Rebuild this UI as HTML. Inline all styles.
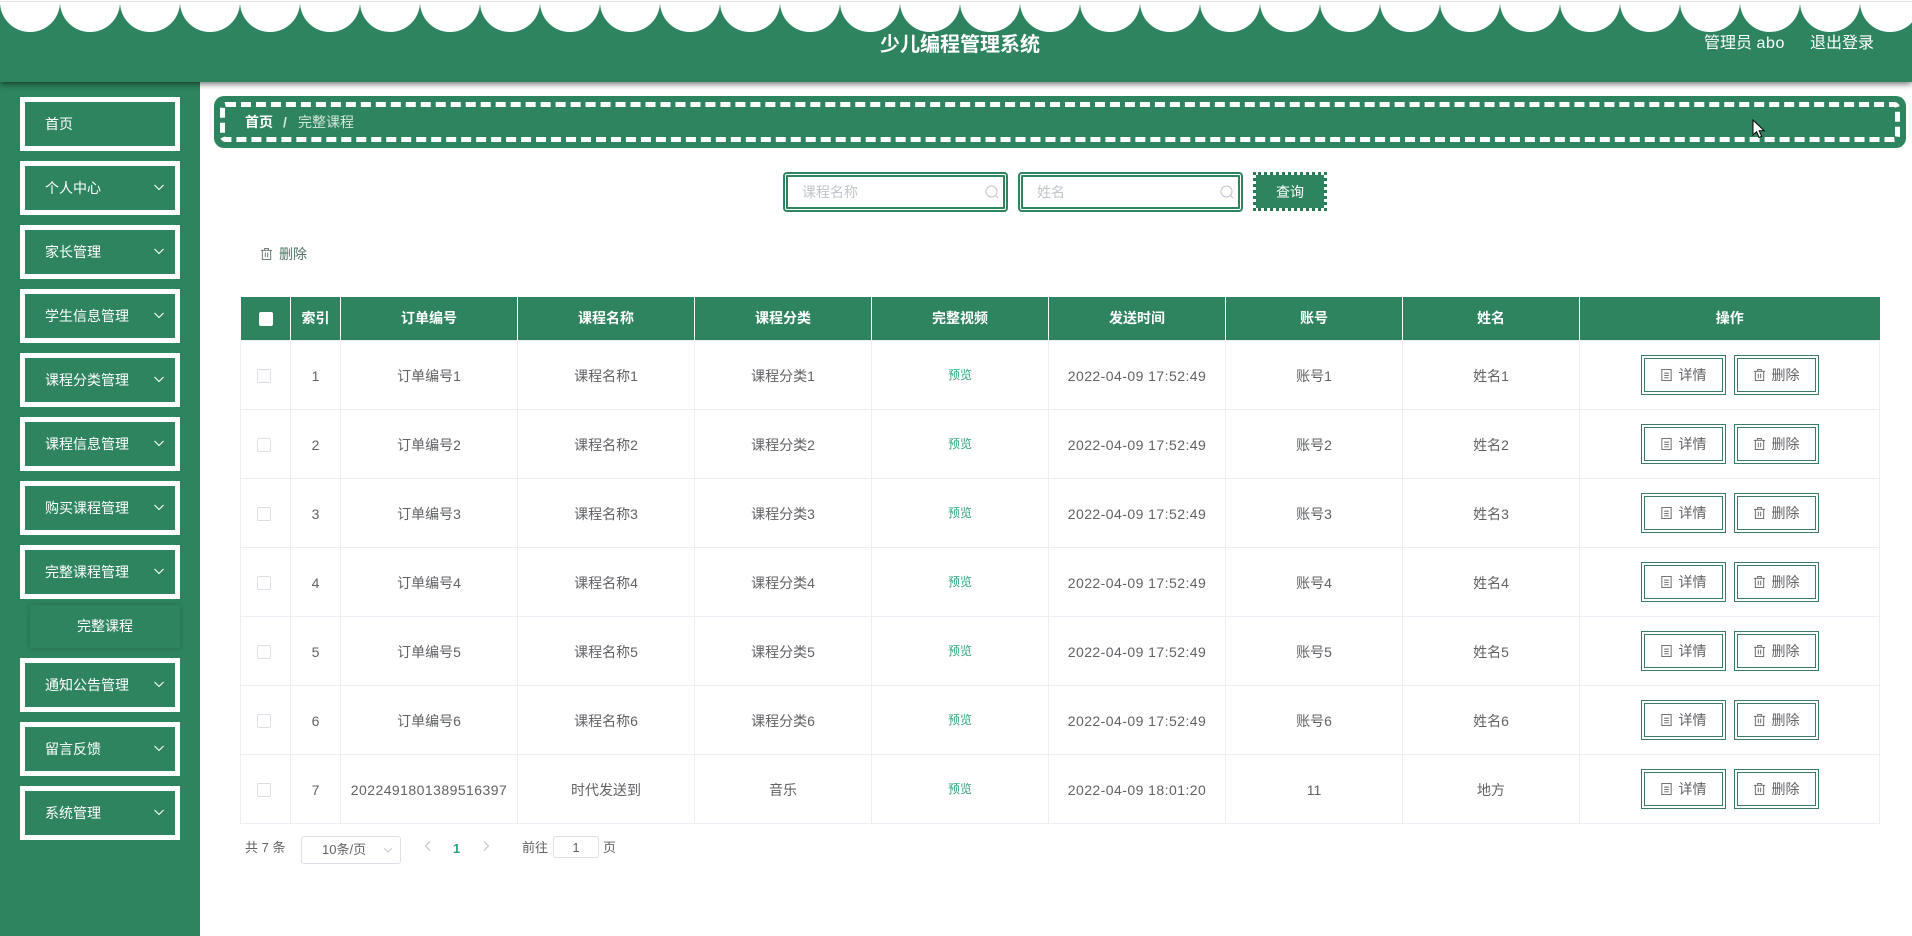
<!DOCTYPE html>
<html lang="zh"><head><meta charset="utf-8"><title>少儿编程管理系统</title>
<style>
*{box-sizing:border-box}
html,body{margin:0;padding:0;width:1912px;height:936px;overflow:hidden;background:#fff;font-family:"Liberation Sans","Noto Sans CJK SC",sans-serif;font-size:14px;color:#606266}
.a{position:absolute}
.hd{left:0;top:0;width:1912px;height:82px;background:#2e845f;box-shadow:0 2px 6px rgba(0,0,0,.55);z-index:3;overflow:hidden}
.line{left:0;top:0;width:1912px;height:4px;background:#fff;border-top:1px solid #fff}
.line:after{content:"";position:absolute;left:0;top:0;width:100%;height:1px;background:#e2e2e2}
.side{left:0;top:82px;width:200px;height:854px;background:#2e845f}
.mi{position:absolute;left:20px;width:160px;height:54px;border:5px solid #fff;background:#2e845f;color:#fff;line-height:44px;padding-left:20px;font-size:14px}
.mi svg{position:absolute;left:128px;top:15px}
.sub{left:30px;top:605px;width:150px;height:43px;background:#2e845f;box-shadow:0 0 5px rgba(0,0,0,.22);color:#fff;line-height:43px;text-align:center;z-index:1}
.bc{left:214px;top:96px;width:1692px;height:52px;background:#2e845f;border-radius:10px}
.bc i{position:absolute;left:6px;top:6px;right:6px;bottom:6px;border:5px dashed #fff;border-radius:6px}
.inp{top:172px;height:40px;width:225px;border:5px double #2e845f;border-radius:4px;background:#fff;color:#c0c4cc;line-height:30px;padding-left:14px}
.inp svg{position:absolute;right:4px;top:8px}
.q{left:1253px;top:172px;width:74px;height:39px;background:#2e845f;background-clip:padding-box;border:3px dotted #2a7a56;color:#fff;line-height:35px;text-align:center}
table{position:absolute;left:240px;top:297px;width:1639px;border-collapse:collapse;table-layout:fixed}
th{height:43px;background:#2e845f;color:#fff;font-weight:700;font-size:14px;border-left:1px solid #fff;padding:0;text-align:center}
th:first-child{border-left:0}
td{height:69px;border:1px solid #ebeef5;padding:2px 0 0;text-align:center;font-size:14px;color:#606266;white-space:nowrap}
td:first-child,td:last-child{padding-top:0}
.cb{display:inline-block;width:14px;height:14px;border:1px solid #dcdfe6;border-radius:2px;background:#fff;vertical-align:middle;position:relative;left:-2px}
.hc{border-color:#fff;left:1px}
.pv{font-size:12px;color:#2fa67c;position:relative;top:-1px}
.n{letter-spacing:.45px}
.b{display:inline-block;width:85px;height:40px;border:4px double #3b7a68;line-height:33px;background:#fff;font-size:14px;color:#606266;vertical-align:middle}
.b+.b{margin-left:8px}
.b svg{vertical-align:-2px;margin-right:6px}
.pg{font-size:13px;color:#606266}
</style></head><body>
<svg width="0" height="0" style="position:absolute"><defs>
<symbol id="tr" viewBox="0 0 14 14"><path d="M1 3h12M5 3V1h4v2M2.5 3v10h9V3M5.7 5.5v5M8.3 5.5v5" fill="none" stroke="currentColor" stroke-width="1"/></symbol>
<symbol id="dc" viewBox="0 0 14 14"><path d="M2 1h10v12H2zM4.5 5h5M4.5 7.5h5M4.5 10h5" fill="none" stroke="currentColor" stroke-width="1"/></symbol>
<symbol id="ch" viewBox="0 0 12 12"><path d="M1.5 4l4.5 4.5L10.500 4" fill="none" stroke="currentColor" stroke-width="1.1"/></symbol>
<symbol id="se" viewBox="0 0 14 14"><circle cx="6.500" cy="6.500" r="5.500" fill="none" stroke="currentColor"/><path d="M10.500 10.500l2.500 2.500" stroke="currentColor"/></symbol>
</defs></svg>

<div class="a hd">
<svg class="a" style="left:0;top:0" width="1912" height="40"><g fill="#fff">
<circle cx="30" cy="2" r="30"/><circle cx="90" cy="2" r="30"/><circle cx="150" cy="2" r="30"/><circle cx="210" cy="2" r="30"/><circle cx="270" cy="2" r="30"/><circle cx="330" cy="2" r="30"/><circle cx="390" cy="2" r="30"/><circle cx="450" cy="2" r="30"/><circle cx="510" cy="2" r="30"/><circle cx="570" cy="2" r="30"/><circle cx="630" cy="2" r="30"/><circle cx="690" cy="2" r="30"/><circle cx="750" cy="2" r="30"/><circle cx="810" cy="2" r="30"/><circle cx="870" cy="2" r="30"/><circle cx="930" cy="2" r="30"/><circle cx="990" cy="2" r="30"/><circle cx="1050" cy="2" r="30"/><circle cx="1110" cy="2" r="30"/><circle cx="1170" cy="2" r="30"/><circle cx="1230" cy="2" r="30"/><circle cx="1290" cy="2" r="30"/><circle cx="1350" cy="2" r="30"/><circle cx="1410" cy="2" r="30"/><circle cx="1470" cy="2" r="30"/><circle cx="1530" cy="2" r="30"/><circle cx="1590" cy="2" r="30"/><circle cx="1650" cy="2" r="30"/><circle cx="1710" cy="2" r="30"/><circle cx="1770" cy="2" r="30"/><circle cx="1830" cy="2" r="30"/><circle cx="1890" cy="2" r="30"/></g></svg>
<div class="a line"></div>
<div class="a" style="left:880px;top:31px;font-size:20px;font-weight:700;color:#fff;line-height:28px;white-space:nowrap">少儿编程管理系统</div>
<div class="a" style="left:1704px;top:32px;font-size:16px;color:#fff;line-height:24px;white-space:nowrap">管理员 <span style="letter-spacing:.6px">abo</span></div>
<div class="a" style="left:1810px;top:32px;font-size:16px;color:#fff;line-height:24px;white-space:nowrap">退出登录</div>
</div>

<div class="a side"></div>
<div class="mi" style="top:97px">首页</div>
<div class="mi" style="top:161px">个人中心<svg width="12" height="12" style="color:#fff"><use href="#ch"/></svg></div>
<div class="mi" style="top:225px">家长管理<svg width="12" height="12" style="color:#fff"><use href="#ch"/></svg></div>
<div class="mi" style="top:289px">学生信息管理<svg width="12" height="12" style="color:#fff"><use href="#ch"/></svg></div>
<div class="mi" style="top:353px">课程分类管理<svg width="12" height="12" style="color:#fff"><use href="#ch"/></svg></div>
<div class="mi" style="top:417px">课程信息管理<svg width="12" height="12" style="color:#fff"><use href="#ch"/></svg></div>
<div class="mi" style="top:481px">购买课程管理<svg width="12" height="12" style="color:#fff"><use href="#ch"/></svg></div>
<div class="mi" style="top:545px">完整课程管理<svg width="12" height="12" style="color:#fff"><use href="#ch"/></svg></div>
<div class="a sub">完整课程</div>
<div class="mi" style="top:658px">通知公告管理<svg width="12" height="12" style="color:#fff"><use href="#ch"/></svg></div>
<div class="mi" style="top:722px">留言反馈<svg width="12" height="12" style="color:#fff"><use href="#ch"/></svg></div>
<div class="mi" style="top:786px">系统管理<svg width="12" height="12" style="color:#fff"><use href="#ch"/></svg></div>

<div class="a bc"><i></i>
<span class="a" style="left:31px;top:15px;font-weight:700;color:#fff;line-height:22px;white-space:nowrap">首页</span>
<span class="a" style="left:69px;top:15px;font-weight:700;color:#d5e6dd;line-height:22px">/</span>
<span class="a" style="left:84px;top:15px;color:#d5e6dd;line-height:22px;font-size:14px;white-space:nowrap">完整课程</span>
</div>

<div class="a inp" style="left:783px">课程名称<svg width="14" height="14"><use href="#se"/></svg></div>
<div class="a inp" style="left:1018px">姓名<svg width="14" height="14"><use href="#se"/></svg></div>
<div class="a q">查询</div>

<svg class="a" style="left:260px;top:247px;color:#5f6f68" width="13" height="14"><use href="#tr"/></svg>
<div class="a" style="left:279px;top:243px;line-height:22px;color:#4f7565;white-space:nowrap">删除</div>

<table><colgroup><col style="width:50px"><col style="width:50px"><col style="width:177px"><col style="width:177px"><col style="width:177px"><col style="width:177px"><col style="width:177px"><col style="width:177px"><col style="width:177px"><col style="width:300px"></colgroup>
<thead><tr><th><span class="cb hc"></span></th><th>索引</th><th>订单编号</th><th>课程名称</th><th>课程分类</th><th>完整视频</th><th>发送时间</th><th>账号</th><th>姓名</th><th>操作</th></tr></thead>
<tbody>
<tr><td><span class="cb"></span></td><td>1</td><td>订单编号1</td><td>课程名称1</td><td>课程分类1</td><td><span class="pv">预览</span></td><td class="n">2022-04-09 17:52:49</td><td>账号1</td><td>姓名1</td><td><span class="b"><svg width="13" height="14"><use href="#dc"/></svg>详情</span><span class="b"><svg width="13" height="14"><use href="#tr"/></svg>删除</span></td></tr>
<tr><td><span class="cb"></span></td><td>2</td><td>订单编号2</td><td>课程名称2</td><td>课程分类2</td><td><span class="pv">预览</span></td><td class="n">2022-04-09 17:52:49</td><td>账号2</td><td>姓名2</td><td><span class="b"><svg width="13" height="14"><use href="#dc"/></svg>详情</span><span class="b"><svg width="13" height="14"><use href="#tr"/></svg>删除</span></td></tr>
<tr><td><span class="cb"></span></td><td>3</td><td>订单编号3</td><td>课程名称3</td><td>课程分类3</td><td><span class="pv">预览</span></td><td class="n">2022-04-09 17:52:49</td><td>账号3</td><td>姓名3</td><td><span class="b"><svg width="13" height="14"><use href="#dc"/></svg>详情</span><span class="b"><svg width="13" height="14"><use href="#tr"/></svg>删除</span></td></tr>
<tr><td><span class="cb"></span></td><td>4</td><td>订单编号4</td><td>课程名称4</td><td>课程分类4</td><td><span class="pv">预览</span></td><td class="n">2022-04-09 17:52:49</td><td>账号4</td><td>姓名4</td><td><span class="b"><svg width="13" height="14"><use href="#dc"/></svg>详情</span><span class="b"><svg width="13" height="14"><use href="#tr"/></svg>删除</span></td></tr>
<tr><td><span class="cb"></span></td><td>5</td><td>订单编号5</td><td>课程名称5</td><td>课程分类5</td><td><span class="pv">预览</span></td><td class="n">2022-04-09 17:52:49</td><td>账号5</td><td>姓名5</td><td><span class="b"><svg width="13" height="14"><use href="#dc"/></svg>详情</span><span class="b"><svg width="13" height="14"><use href="#tr"/></svg>删除</span></td></tr>
<tr><td><span class="cb"></span></td><td>6</td><td>订单编号6</td><td>课程名称6</td><td>课程分类6</td><td><span class="pv">预览</span></td><td class="n">2022-04-09 17:52:49</td><td>账号6</td><td>姓名6</td><td><span class="b"><svg width="13" height="14"><use href="#dc"/></svg>详情</span><span class="b"><svg width="13" height="14"><use href="#tr"/></svg>删除</span></td></tr>
<tr><td><span class="cb"></span></td><td>7</td><td class="n">2022491801389516397</td><td>时代发送到</td><td>音乐</td><td><span class="pv">预览</span></td><td class="n">2022-04-09 18:01:20</td><td>11</td><td>地方</td><td><span class="b"><svg width="13" height="14"><use href="#dc"/></svg>详情</span><span class="b"><svg width="13" height="14"><use href="#tr"/></svg>删除</span></td></tr>
</tbody></table>

<div class="a pg" style="left:245px;top:838px;line-height:20px;white-space:nowrap">共 7 条</div>
<div class="a pg" style="left:301px;top:836px;width:100px;height:28px;border:1px solid #dcdfe6;border-radius:3px;line-height:26px;padding-left:20px;white-space:nowrap">10条/页<svg class="a" style="left:81px;top:8px;color:#c0c4cc" width="10" height="10"><use href="#ch"/></svg></div>
<svg class="a" style="left:422px;top:840px" width="12" height="12"><path d="M8 1.500L3.500 6 8 10.500" fill="none" stroke="#c0c4cc" stroke-width="1.200"/></svg>
<div class="a pg" style="left:453px;top:839px;line-height:20px;font-weight:700;color:#2fa67c">1</div>
<svg class="a" style="left:480px;top:840px" width="12" height="12"><path d="M4 1.500L8.500 6 4 10.500" fill="none" stroke="#c0c4cc" stroke-width="1.200"/></svg>
<div class="a pg" style="left:522px;top:838px;line-height:20px;white-space:nowrap">前往</div>
<div class="a pg" style="left:553px;top:836px;width:46px;height:22px;border:1px solid #dcdfe6;border-radius:3px;line-height:21px;text-align:center">1</div>
<div class="a pg" style="left:603px;top:838px;line-height:20px">页</div>

<svg class="a" style="left:1752px;top:119px;z-index:5" width="14" height="20" viewBox="0 0 14 20"><path d="M1 1v15l3.600-3.300 2.400 5.800 2.700-1.100-2.500-5.600h5z" fill="#fff" stroke="#000" stroke-width="1"/></svg>
</body></html>
